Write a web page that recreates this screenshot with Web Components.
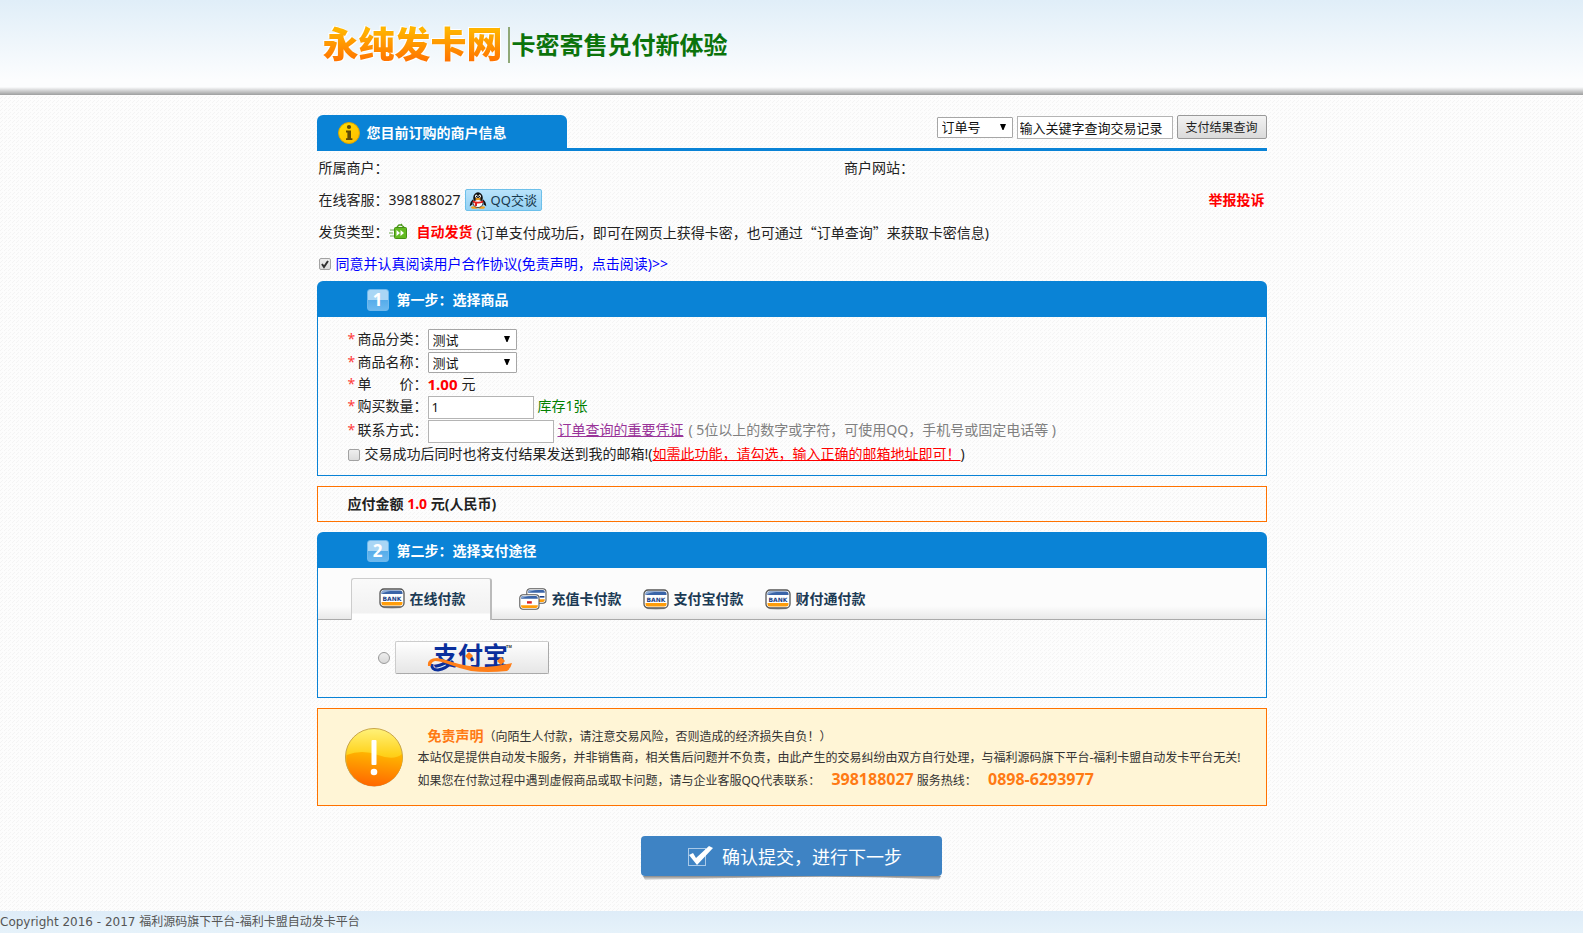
<!DOCTYPE html>
<html lang="zh-CN">
<head>
<meta charset="utf-8">
<title>永纯发卡网</title>
<style>
  html { height: 100%; }
  body {
    margin: 0;
    min-height: 100%;
    color: #222;
    font: 14px/22px "Noto Sans", "Noto Sans CJK SC", sans-serif;
    background: #fdfdfd url("data:image/svg+xml,%3Csvg xmlns='http://www.w3.org/2000/svg' width='4' height='4' shape-rendering='crispEdges'%3E%3Cpath d='M2 0h1v1h-1zM1 1h1v1h-1zM0 2h1v1h-1z' fill='%23f4f4f4'/%3E%3C/svg%3E");
  }
</style>
</head>
<body>
<card-shop-page></card-shop-page>
<script>
const BASE = `
  *, *::before, *::after { box-sizing: border-box; }
  :host { display: block; }
  a { color: inherit; }
  button, input, select { font-family: inherit; margin: 0; }
  button { cursor: pointer; }
  svg { display: block; flex: none; overflow: visible; }
  input[type=text] {
    appearance: none; background: #fff; border: 1px solid #b4b4b4; border-radius: 0;
    padding: 2px 3px; height: 23px; color: #111; font-size: 13px; outline: 0;
  }
  select {
    appearance: none; height: 21px; padding: 0 16px 0 4px; color: #111; font-size: 13px;
    border: 1px solid #a6a6a6; border-radius: 1px;
    background: #fff url("data:image/svg+xml,%3Csvg xmlns='http://www.w3.org/2000/svg' width='6' height='6'%3E%3Cpath d='M0 0h6L3.500 6h-1z' fill='%23000'/%3E%3C/svg%3E") no-repeat right 6px top 6px;
  }
  input[type=checkbox] {
    appearance: none; flex: none; width: 12px; height: 12px; border: 1px solid #a2a2a2; border-radius: 2px;
    background: linear-gradient(#eee, #dcdcdc);
  }
  input[type=checkbox]:checked {
    background: url("data:image/svg+xml,%3Csvg xmlns='http://www.w3.org/2000/svg' width='10' height='10'%3E%3Cpath d='M2 5l2 3 4-6' fill='none' stroke='%23333' stroke-width='2'/%3E%3C/svg%3E") center no-repeat, linear-gradient(#eee, #dcdcdc);
  }
`;
const define = (name, css, html) => customElements.define(name, class extends HTMLElement {
  constructor() {
    super();
    const t = document.createElement('template');
    t.innerHTML = `<style>${BASE}${css}</style>${html}`;
    this.attachShadow({ mode: 'open' }).append(t.content.cloneNode(true));
  }
});

define('site-header', `
  :host { background: linear-gradient(transparent 87px, #00000060 95px), linear-gradient(#e0eef8, #fcfdfe 80px); }
  .inner { width: 950px; max-width: 100%; height: 95px; margin: 0 auto; padding: 0 6px; display: flex; align-items: center; }
  h1 {
    margin: 0; font-size: 36px; line-height: 44px; font-weight: 900; padding-bottom: 6px;
    filter: drop-shadow(1px 1px 0 #fff) drop-shadow(-1px -1px 0 #fff);
  }
  h1 span { background: linear-gradient(#ffb400 20%, #ff7200 85%); background-clip: text; -webkit-background-clip: text; color: transparent; }
  p { margin: 0 0 6px 5px; border-left: 2px solid #8fa878; padding-left: 2px; color: #0b730b; font-size: 24px; line-height: 36px; font-weight: 700; }
`, `<div class="inner"><h1><span>永纯发卡网</span></h1><p>卡密寄售兑付新体验</p></div>`);

define('order-search', `
  form { display: flex; align-items: center; gap: 4px; }
  select { width: 76px; }
  input[type=text] { width: 156px; padding: 2px; }
  button { width: 90px; height: 24px; padding: 0; font-size: 12px; color: #222; border: 1px solid #999; border-radius: 2px; background: linear-gradient(#f2f2f2, #dadada); }
`, `<form><select aria-label="查询类型"><option>订单号</option></select>
  <input type="text" aria-label="关键字" value="输入关键字查询交易记录">
  <button type="button">支付结果查询</button></form>`);

define('merchant-info', `
  header { display: flex; justify-content: space-between; align-items: flex-start; border-bottom: 3px solid #0a83d6; margin-bottom: 1px; }
  h2 { margin: 0; width: 250px; height: 33px; padding: 3px 0 0 21px; display: flex; align-items: center; gap: 7px; background: #0a83d6; color: #fff; border-radius: 6px 6px 0 0; font-size: 14px; }
  .row { display: grid; grid-template-columns: 5fr 4fr; align-items: center; height: 32px; padding: 0 2px; }
  .row > div { display: flex; align-items: center; white-space: nowrap; }
  .qq { display: flex; align-items: center; gap: 5px; width: 77px; height: 22px; margin-left: 4px; padding: 0 0 0 4px; border: 1px solid #6dc0ea; border-radius: 2px; background: linear-gradient(#b9e3fb, #94d1f3); color: #17384c; font-size: 13px; text-decoration: none; }
  .row > .report { justify-content: flex-end; }
  .report a { color: #f00; font-weight: 700; text-decoration: none; }
  .row > .wide { grid-column: 1 / -1; }
  b { color: #f00; margin: 0 4px 0 9px; }
  .quote { font-family: "Noto Sans CJK SC", sans-serif; }
  .agree a { color: #00f; text-decoration: none; margin-left: 5px; }
`, `<header><h2>
    <svg width="22" height="22" viewBox="0 0 22 22"><defs><linearGradient id="g" x2="1" y2="1"><stop stop-color="#ffe000"/><stop offset="1" stop-color="#fb0"/></linearGradient></defs><circle cx="11" cy="11" r="10.5" fill="url(#g)" stroke="#d9a400"/><circle cx="11" cy="5" r="2.1" fill="#5e4a05"/><path d="M8 8.6h5v7.6h1.4V18H8v-1.8h1.4v-5.8H8z" fill="#5e4a05"/></svg>
    您目前订购的商户信息</h2><order-search></order-search></header>
  <div class="row"><div>所属商户：</div><div>商户网站：</div></div>
  <div class="row"><div>在线客服：398188027
    <a class="qq" href="#"><svg width="16" height="17" viewBox="0 0 16 17"><path d="M3.2 8Q1 10 .7 12.7l1.6-1M12.8 8q2.200 2 2.500 4.700l-1.600-1" stroke="#111" stroke-width="1.500" fill="#111"/><ellipse cx="4.500" cy="15.500" rx="3.500" ry="1.300" fill="#f6a21c"/><ellipse cx="11.500" cy="15.500" rx="3.500" ry="1.300" fill="#f6a21c"/><ellipse cx="8" cy="6" rx="4.800" ry="5.700" fill="#111"/><ellipse cx="8" cy="11.500" rx="4.800" ry="4" fill="#fff" stroke="#222" stroke-width=".8"/><ellipse cx="6.300" cy="4.200" rx="1.200" ry="1.600" fill="#fff"/><ellipse cx="9.700" cy="4.200" rx="1.200" ry="1.600" fill="#fff"/><circle cx="6.600" cy="4.400" r=".6"/><circle cx="9.400" cy="4.400" r=".6"/><ellipse cx="8" cy="7" rx="2.800" ry="1" fill="#f6a21c"/><path d="M2.800 8.500q5.200 2.500 10.400 0v2q-3 1.200-6.200 1v2.500H4.800V11l-2-.8z" fill="#e2211c"/></svg>QQ交谈</a></div>
    <div class="report"><a href="#">举报投诉</a></div></div>
  <div class="row"><div class="wide">发货类型：
    <svg width="19" height="16" viewBox="0 0 19 16"><path d="M1 6h4M0 9h4M1 12h4" stroke="#6aa84f"/><path d="M8 3l2-2h2l1-1M12 1l3 2" fill="none" stroke="#4c9a1c" stroke-width="1.300"/><rect x="5.500" y="3.500" width="12" height="11" rx="1" fill="#63bb21" stroke="#459012"/><path d="M7.500 6l3.500 3-3.500 3zM11.500 6L15 9l-3.500 3z" fill="#fff"/></svg>
    <b>自动发货</b><span>(订单支付成功后，即可在网页上获得卡密，也可通过<span class="quote">“订单查询”</span>来获取卡密信息)</span></div></div>
  <div class="row agree"><div class="wide"><input type="checkbox" checked aria-label="同意用户合作协议"><a href="#">同意并认真阅读用户合作协议(免责声明，点击阅读)&gt;&gt;</a></div></div>`);

define('step-badge', `
  :host { width: 22px; height: 22px; border-radius: 3px; border: 1px solid #6fb8ec; background: linear-gradient(#a9d6f5 50%, #55acea 50%, #6cb9ef); color: #fff; text-align: center; font: 700 17px/20px "Open Sans", "Noto Sans", sans-serif; }
`, `<slot></slot>`);

define('step-panel', `
  :host { margin-bottom: 10px; }
  h2 { margin: 0; height: 36px; padding: 1px 0 0 50px; display: flex; align-items: center; gap: 8px; background: #0a83d6; color: #fff; border-radius: 6px 6px 0 0; font-size: 14px; }
  .body { border: 1px solid #0a83d6; border-top: 0; }
`, `<h2><slot name="badge"></slot><slot name="title"></slot></h2><div class="body"><slot></slot></div>`);

define('product-form', `
  :host { padding: 11px 30px 9px; }
  .row { display: flex; align-items: center; height: 24px; white-space: nowrap; line-height: 20px; }
  .row > :not(input, select) { padding-bottom: 2px; }
  .pick { height: 23px; }
  .price { height: 21px; }
  i { width: 10px; font-style: normal; color: #ff3c3c; }
  .name { width: 70px; display: flex; justify-content: space-between; }
  select { width: 89px; }
  #num { width: 106px; margin-right: 4px; }
  #contact { width: 126px; margin-right: 4px; }
  b { color: #f00; font-size: 15px; margin-right: 4px; }
  .stock { color: #008000; }
  .key { color: #939; }
  .hint { color: #808080; margin-left: 5px; }
  .mail label { margin-left: 5px; }
  .mail a { color: #f00; }
  .mail { height: 23px; }
`, `
  <div class="row pick"><i>*</i><label class="name" for="cat">商品分类：</label><select id="cat"><option>测试</option></select></div>
  <div class="row pick"><i>*</i><label class="name" for="item">商品名称：</label><select id="item"><option>测试</option></select></div>
  <div class="row price"><i>*</i><span class="name"><span>单</span><span>价：</span></span><b>1.00</b><span>元</span></div>
  <div class="row"><i>*</i><label class="name" for="num">购买数量：</label><input type="text" id="num" value="1"><span class="stock">库存1张</span></div>
  <div class="row"><i>*</i><label class="name" for="contact">联系方式：</label><input type="text" id="contact"><a class="key" href="#">订单查询的重要凭证</a><span class="hint">( 5位以上的数字或字符，可使用QQ，手机号或固定电话等 )</span></div>
  <div class="row mail"><input type="checkbox" id="mail"><label for="mail">交易成功后同时也将支付结果发送到我的邮箱!(<a href="#">如需此功能，请勾选，输入正确的邮箱地址即可！</a>)</label></div>`);

define('amount-due', `
  :host { margin-bottom: 10px; height: 36px; padding-left: 30px; border: 1px solid #ff7200; line-height: 34px; font-weight: 700; }
  span { color: #f00; }
`, `应付金额 <span>1.0</span> 元(人民币)`);

const card = (x, y, s) => `<g transform="translate(${x} ${y}) scale(${s})"><rect x="1" y="1" width="24" height="18" rx="4" fill="#fff" stroke="#555" stroke-width="1.300"/><path d="M2.500 6V5q0-2.500 2.500-2.500h16q2.500 0 2.500 2.500v1z" fill="#3a64a8"/><path d="M2.500 6q4-3 13-3.500H5Q2.500 2.500 2.500 5z" fill="#8ca9d2"/><path d="M2.500 14h21v1q0 2.500-2.500 2.500H5q-2.500 0-2.500-2.500z" fill="#ff9d0a"/>`;
define('bank-icon', ``, `<svg width="26" height="21" viewBox="0 0 26 21"><ellipse cx="13" cy="19.500" rx="10" ry="1.200" fill="#bbb"/>${card(0, 0, 1)}<text x="13" y="12.500" text-anchor="middle" font-family="DejaVu Sans, sans-serif" font-size="6" font-weight="700" fill="#1b3f86">BANK</text></g></svg>`);
define('cards-icon', ``, `<svg width="28" height="22" viewBox="0 0 28 22">${card(7, 0, .8)}<path d="M17 11h6" stroke="#1b3f86" stroke-width="2"/></g>${card(0, 6, .8)}<path d="M10 10.500h6" stroke="#d22" stroke-width="3"/></g></svg>`);

define('payment-methods', `
  nav { display: flex; align-items: flex-end; gap: 21px; height: 52px; padding-left: 33px; border-bottom: 1px solid #aaa; background: linear-gradient(#fcfcfc 38px, #e9e9e9); }
  button { display: flex; align-items: center; gap: 5px; height: 42px; padding: 2px 0 0; border: 0; background: none; color: #1b3a54; font-size: 14px; line-height: 20px; font-weight: 700; white-space: nowrap; }
  button[aria-selected=true] { width: 141px; padding: 0 0 2px 27px; margin: 0 6px -1px 0; height: 42px; border: 1px solid #ccc; border-right: 2px solid #bbb; border-bottom: 0; border-radius: 3px 3px 0 0; background: linear-gradient(#fafafa, #f1f1f1 34px, #fefefe 35px); }
  .pay { display: flex; align-items: center; height: 77px; padding: 0 0 2px 60px; }
  input { appearance: none; width: 12px; height: 12px; border: 1px solid #999; border-radius: 50%; background: linear-gradient(#eee, #d8d8d8); }
  label { margin-left: 5px; width: 154px; height: 33px; border: 1px solid #ccc; border-right-color: #aaa; border-bottom-color: #aaa; border-radius: 2px; background: linear-gradient(#fefefe, #e6e6e6); }
`, `<nav role="tablist">
    <button role="tab" aria-selected="true"><bank-icon></bank-icon>在线付款</button>
    <button role="tab"><cards-icon></cards-icon>充值卡付款</button>
    <button role="tab"><bank-icon></bank-icon>支付宝付款</button>
    <button role="tab"><bank-icon></bank-icon>财付通付款</button>
  </nav>
  <div class="pay"><input type="radio" id="alipay" name="pay"><label for="alipay">
    <svg width="152" height="31" viewBox="0 0 152 31"><text x="37" y="23" font-family="Noto Sans CJK SC, sans-serif" font-size="25" font-weight="700" fill="#0a2f9c">支付宝</text><text x="110" y="6" font-family="Liberation Sans, sans-serif" font-size="4" font-weight="700" fill="#333">TM</text><path d="M57 19q-7 8-15 9-7 0-6-6" fill="none" stroke="#0a2f9c" stroke-width="3"/><path d="M32 24q-1-8 9-8 7 1 15 4 15 5 33 5 15-1 27-4-1 5-5 8-20 2-36 0-13-3-23-7-8-3-13-3-4 1-4 5z" fill="#ff7f19"/><path d="M73 10l4 4-4 4-4-4zM105 15l4 4-4 4-4-4z" fill="#ff7f19"/></svg>
  </label></div>`);

define('risk-notice', `
  :host { display: flex; align-items: center; height: 98px; padding: 0 0 0 26px; border: 1px solid #ff7200; background: #fff5d6; font-size: 12px; color: #333; }
  .text { margin-left: 14px; padding-top: 2px; }
  p { margin: 0; height: 22px; line-height: 22px; white-space: nowrap; }
  strong { margin-left: 10px; color: #ff7a14; font-size: 14px; }
  b { margin-left: 8px; color: #ff7a14; font-size: 16px; line-height: 20px; }
`, `<svg width="60" height="60" viewBox="0 0 60 60"><defs><linearGradient id="o" x2="0" y2="1"><stop stop-color="#fff27a"/><stop offset=".45" stop-color="#ffd21c"/><stop offset="1" stop-color="#ff9000"/></linearGradient><linearGradient id="p" x1=".6" x2=".4" y2="1"><stop stop-color="#ffb800"/><stop offset="1" stop-color="#ff6600"/></linearGradient></defs><circle cx="30" cy="31" r="28.500" fill="#b9a878"/><circle cx="30" cy="30" r="28.500" fill="url(#o)" stroke="#c9a64a"/><path d="M2.500 28Q18 22 34 28t24-1A28 28 0 1 1 2.500 28z" fill="url(#p)"/><rect x="27.500" y="13" width="5" height="25" rx="1" fill="#fff"/><circle cx="30" cy="45" r="3.300" fill="#fff"/></svg>
  <div class="text"><p><strong>免责声明</strong>（向陌生人付款，请注意交易风险，否则造成的经济损失自负！）</p>
  <p>本站仅是提供自动发卡服务，并非销售商，相关售后问题并不负责，由此产生的交易纠纷由双方自行处理，与福利源码旗下平台-福利卡盟自动发卡平台无关!</p>
  <p>如果您在付款过程中遇到虚假商品或取卡问题，请与企业客服QQ代表联系： <b>398188027</b> 服务热线： <b>0898-6293977</b></p></div>`);

define('submit-order', `
  :host { display: flex; flex-direction: column; align-items: center; padding: 30px 0; }
  button { width: 301px; height: 40px; display: flex; align-items: center; padding: 0 0 0 46px; gap: 8px; border: 0; border-radius: 4px; background: #3e83c4; color: #fff; font-size: 18px; }
`, `<button type="button"><svg width="27" height="24" viewBox="0 0 27 24"><rect x="1.500" y="4.500" width="17" height="17" fill="none" stroke="#a9c9e8"/><path d="M2 11l4-2 3 5L22 2l4 2-16 17z" fill="#fff"/></svg>确认提交，进行下一步</button>
  <svg width="302" height="5" viewBox="0 0 302 5"><defs><linearGradient id="s" x2="0" y2="1"><stop stop-color="#888"/><stop offset="1" stop-color="#e8e8e8"/></linearGradient></defs><path d="M2 0h298l-2 4Q230 0 151 1T4 4z" fill="url(#s)"/></svg>`);

define('site-footer', `
  :host { background: linear-gradient(#deecf8, #e6f2fa); color: #555; font: 12px/22px "DejaVu Sans", "Noto Sans CJK SC", sans-serif; }
`, `Copyright 2016 - 2017 福利源码旗下平台-福利卡盟自动发卡平台`);

define('card-shop-page', `
  main { width: 950px; max-width: 100%; margin: 0 auto; padding-top: 20px; }
  merchant-info { margin-bottom: 1px; }
`, `<site-header></site-header>
  <main>
    <merchant-info></merchant-info>
    <step-panel><step-badge slot="badge">1</step-badge><span slot="title">第一步：选择商品</span><product-form></product-form></step-panel>
    <amount-due></amount-due>
    <step-panel><step-badge slot="badge">2</step-badge><span slot="title">第二步：选择支付途径</span><payment-methods></payment-methods></step-panel>
    <risk-notice></risk-notice>
    <submit-order></submit-order>
  </main>
  <site-footer></site-footer>`);
</script>
</body>
</html>
